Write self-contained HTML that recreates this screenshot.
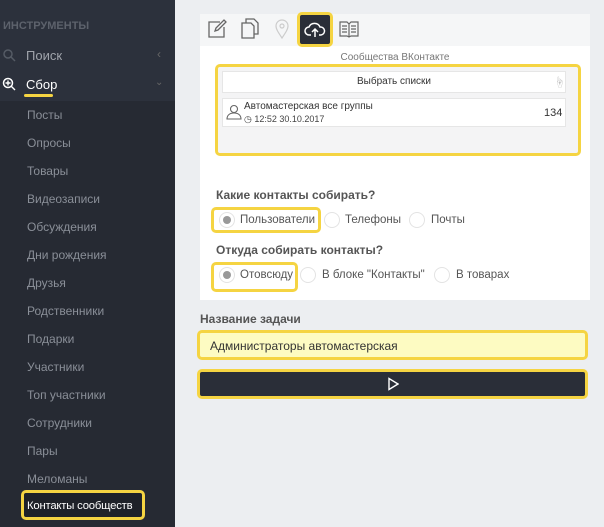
<!DOCTYPE html>
<html><head><meta charset="utf-8"><style>
*{box-sizing:border-box;margin:0;padding:0}
body{width:604px;height:527px;overflow:hidden;background:#eceef1;font-family:"Liberation Sans","Noto Sans CJK SC",sans-serif;position:relative}
.sb{position:absolute;left:0;top:0;width:175px;height:527px;background:#2c313c}
.sub{position:absolute;left:0;top:101px;width:175px;height:426px;background:#262a33}
.t{position:absolute;font-size:12px;color:#8a8f98;white-space:nowrap}
.a{position:absolute}
.main{position:absolute;left:200px;top:14px;width:390px;height:286px;background:#fff}
.tb{position:absolute;left:0;top:0;width:390px;height:32px;background:#f5f6f7}
.yb{position:absolute;border:3px solid #f5d442;border-radius:5px}
.rad{position:absolute;width:16px;height:16px;border-radius:50%;border:1px solid #e3e3e3;background:#fff}
.rad.on::after{content:"";position:absolute;left:3px;top:3px;width:8px;height:8px;border-radius:50%;background:#999}
.r{font-size:11.5px!important;color:#555}
</style></head><body>
<div class="sb"></div><div class="sub"></div>
<div class="t" style="left:3px;top:20px;font-size:11px;font-weight:bold;color:#5d626c">ИНСТРУМЕНТЫ</div>
<svg class="a" style="left:2px;top:48px" width="14" height="14"><circle cx="6" cy="6" r="4" stroke="#555b65" stroke-width="1.5" fill="none"/><path d="M9 9l4 4" stroke="#555b65" stroke-width="1.5"/></svg>
<div class="t" style="left:26px;top:48px;font-size:13px;color:#a0a4ab">Поиск</div>
<div class="t" style="left:157px;top:47px;color:#666">‹</div>
<svg class="a" style="left:2px;top:77px" width="14" height="14"><circle cx="6" cy="6" r="4.5" stroke="#fff" stroke-width="1.5" fill="none"/><path d="M9 9l4 4M6 3.5v5M3.5 6h5" stroke="#fff" stroke-width="1.4"/></svg>
<div class="t" style="left:26px;top:77px;font-size:13px;color:#fff">Сбор</div>
<div class="a" style="left:24px;top:94px;width:29px;height:3px;background:#f5d442;border-radius:2px"></div>
<div class="t" style="left:155px;top:77px;color:#666;font-size:10px">⌄</div>
<div class="t" style="left:27px;top:108px">Посты</div>
<div class="t" style="left:27px;top:136px">Опросы</div>
<div class="t" style="left:27px;top:164px">Товары</div>
<div class="t" style="left:27px;top:192px">Видеозаписи</div>
<div class="t" style="left:27px;top:220px">Обсуждения</div>
<div class="t" style="left:27px;top:248px">Дни рождения</div>
<div class="t" style="left:27px;top:276px">Друзья</div>
<div class="t" style="left:27px;top:304px">Родственники</div>
<div class="t" style="left:27px;top:332px">Подарки</div>
<div class="t" style="left:27px;top:360px">Участники</div>
<div class="t" style="left:27px;top:388px">Топ участники</div>
<div class="t" style="left:27px;top:416px">Сотрудники</div>
<div class="t" style="left:27px;top:444px">Пары</div>
<div class="t" style="left:27px;top:472px">Меломаны</div>
<div class="yb" style="left:21px;top:490px;width:124px;height:30px;background:#1f2229"></div>
<div class="t" style="left:27px;top:500px;color:#fff;font-size:11.3px;letter-spacing:-0.2px">Контакты сообществ</div>

<div class="main">
<div class="tb"></div>
<svg class="a" style="left:7px;top:5px" width="20" height="20" fill="none" stroke="#666" stroke-width="1.3"><path d="M13 3H2v15h15V8"/><path d="M8 12l1-3 8-8 2 2-8 8z"/></svg>
<svg class="a" style="left:40px;top:4px" width="20" height="22" fill="none" stroke="#666" stroke-width="1.3"><path d="M2 5h9l3 3v12H2z"/><path d="M6 5V1h8l4 4v11h-4"/></svg>
<svg class="a" style="left:75px;top:5px" width="14" height="20" fill="none" stroke="#ccc" stroke-width="1.2"><path d="M7 19C3 13 1 10 1 7a6 6 0 0112 0c0 3-2 6-6 12z"/><circle cx="7" cy="7" r="2"/></svg>
<div class="yb" style="left:97px;top:-2px;width:36px;height:35px;background:#2a2e38"></div>
<svg class="a" style="left:104px;top:5px" width="22" height="20" fill="none" stroke="#fff" stroke-width="1.5"><path d="M7 16H5a4 4 0 010-8 6 6 0 0111 0 4 4 0 011 8h-2"/><path d="M11 18v-8M8 13l3-3 3 3"/></svg>
<svg class="a" style="left:139px;top:5px" width="20" height="20" fill="none" stroke="#666" stroke-width="1.2"><path d="M1 3h7l2 2 2-2h7v14h-7l-2 1-2-1H1z M10 5v13 M3 7h5M3 10h5M3 13h5M12 7h5M12 10h5M12 13h5"/></svg>
<div class="t" style="left:0;width:390px;text-align:center;top:38px;font-size:10px;color:#777">Сообщества ВКонтакте</div>
<div class="yb" style="left:15px;top:50px;width:366px;height:92px;background:#f4f4f5"></div>
<div class="a" style="left:22px;top:57px;width:344px;height:22px;background:#fff;border:1px solid #e6e6e6"></div>
<div class="t" style="left:22px;width:344px;text-align:center;top:62px;font-size:10px;color:#333">Выбрать списки</div>
<div class="t" style="left:354px;top:60px;font-size:11px;color:#bbb">☝</div>
<div class="a" style="left:22px;top:84px;width:344px;height:29px;background:#fff;border:1px solid #e6e6e6"></div>
<svg class="a" style="left:26px;top:90px" width="16" height="16" fill="none" stroke="#666" stroke-width="1.1"><circle cx="8" cy="5" r="3.5"/><path d="M1 15c0-4 3-6 7-6s7 2 7 6z"/></svg>
<div class="t" style="left:44px;top:87px;font-size:10px;color:#333">Автомастерская все группы</div>
<div class="t" style="left:44px;top:100px;font-size:9px;color:#444">◷ 12:52 30.10.2017</div>
<div class="t" style="left:344px;top:93px;font-size:11px;color:#333">134</div>
<div class="t" style="left:16px;top:174px;font-size:12px;font-weight:bold;color:#555">Какие контакты собирать?</div>
<div class="yb" style="left:11px;top:193px;width:110px;height:26px"></div>
<div class="rad on" style="left:19px;top:198px"></div>
<div class="t r" style="left:40px;top:200px">Пользователи</div>
<div class="rad" style="left:124px;top:198px"></div>
<div class="t r" style="left:145px;top:200px">Телефоны</div>
<div class="rad" style="left:209px;top:198px"></div>
<div class="t r" style="left:231px;top:200px">Почты</div>
<div class="t" style="left:16px;top:229px;font-size:12px;font-weight:bold;color:#555">Откуда собирать контакты?</div>
<div class="yb" style="left:11px;top:248px;width:87px;height:30px"></div>
<div class="rad on" style="left:19px;top:253px"></div>
<div class="t r" style="left:40px;top:255px">Отовсюду</div>
<div class="rad" style="left:100px;top:253px"></div>
<div class="t r" style="left:122px;top:255px">В блоке "Контакты"</div>
<div class="rad" style="left:234px;top:253px"></div>
<div class="t r" style="left:256px;top:255px">В товарах</div>
</div>

<div class="t" style="left:200px;top:312px;font-size:12px;font-weight:bold;color:#555">Название задачи</div>
<div class="yb" style="left:197px;top:330px;width:391px;height:30px;background:#fdfbc2"></div>
<div class="t" style="left:210px;top:339px;font-size:12px;color:#333">Администраторы автомастерская</div>
<div class="yb" style="left:197px;top:369px;width:391px;height:30px;background:#2a2e38"></div>
<svg class="a" style="left:387px;top:377px" width="12" height="14" fill="none" stroke="#fff" stroke-width="1.4"><path d="M2 1.5v11l9-5.5z"/></svg>
</body></html>
